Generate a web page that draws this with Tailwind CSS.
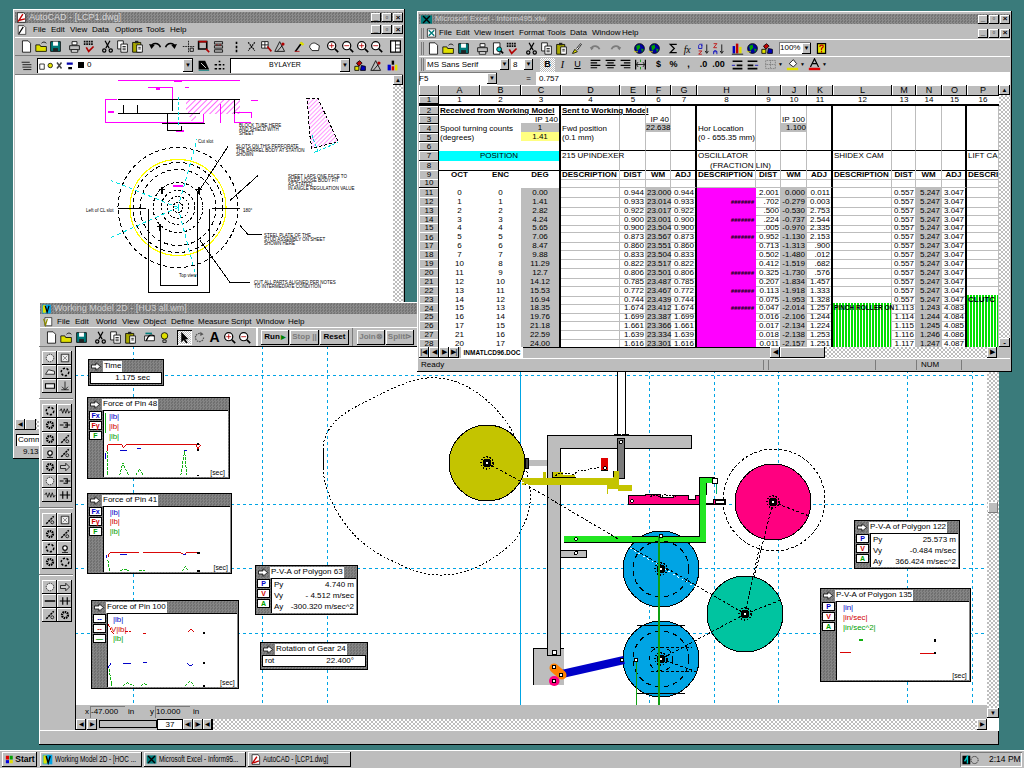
<!DOCTYPE html>
<html lang="en">
<head>
<meta charset="UTF-8">
<title>Desktop</title>
<script src="https://cdn.jsdelivr.net/npm/@tailwindcss/browser@4"></script>
</head>
<body class="m-0 overflow-hidden">
<!-- shared icons -->
<svg class="absolute h-0 w-0" xmlns="http://www.w3.org/2000/svg">
  <defs>
    <symbol id="new" viewBox="0 0 16 16"><path d="M3 1h7l3 3v11H3z" fill="#fff" stroke="#000"/></symbol>
    <symbol id="open" viewBox="0 0 16 16"><path d="M1 6h5l1 2h7v6H1z" fill="#e0e000" stroke="#000"/><path d="M8 4c2-2 4-2 6 0" fill="none" stroke="#000"/></symbol>
    <symbol id="save" viewBox="0 0 16 16"><path d="M2 2h12v12H2z" fill="#007b7b" stroke="#000"/><path d="M5 2h6v5H5z" fill="#fff"/><path d="M5 10h6v4H5z" fill="#222"/></symbol>
    <symbol id="print" viewBox="0 0 16 16"><path d="M5 2h6v4H5z" fill="#fff" stroke="#000"/><path d="M2 7h12v5H2z" fill="#bdbdbd" stroke="#000"/><path d="M4 12h8v3H4z" fill="#fff" stroke="#000"/></symbol>
    <symbol id="preview" viewBox="0 0 16 16"><path d="M3 1h8v14H3z" fill="#fff" stroke="#000"/><circle cx="10" cy="9" r="3" fill="#00c4c4" stroke="#000"/><path d="M12 11l3 3" stroke="#000" stroke-width="2"/></symbol>
    <symbol id="spell" viewBox="0 0 16 16"><path d="M1 2h12M1 5h12" stroke="#000" stroke-width="2" stroke-dasharray="2 1"/><path d="M4 9l3 5 6-6" fill="none" stroke="#b00000" stroke-width="2"/></symbol>
    <symbol id="cut" viewBox="0 0 16 16"><path d="M5 1l5 9M11 1l-5 9" stroke="#000" stroke-width="1.5"/><circle cx="4" cy="13" r="2" fill="none" stroke="#000" stroke-width="1.5"/><circle cx="12" cy="13" r="2" fill="none" stroke="#000" stroke-width="1.5"/></symbol>
    <symbol id="copy" viewBox="0 0 16 16"><path d="M2 1h7v10H2z" fill="#fff" stroke="#000"/><path d="M6 5h8v10H6z" fill="#fff" stroke="#000"/><path d="M8 8h4M8 10h4M8 12h4" stroke="#000"/></symbol>
    <symbol id="paste" viewBox="0 0 16 16"><path d="M2 3h10v12H2z" fill="#a8a800" stroke="#000"/><path d="M5 1h4v3H5z" fill="#222"/><path d="M7 6h7v9H7z" fill="#fff" stroke="#000"/><path d="M9 9h3M9 11h3" stroke="#000"/></symbol>
    <symbol id="brush" viewBox="0 0 16 16"><path d="M3 14l3-5 3 3-5 2z" fill="#e0e000" stroke="#000"/><path d="M8 8l5-6 1 1-5 7" fill="#fff" stroke="#000"/></symbol>
    <symbol id="undo" viewBox="0 0 16 16"><path d="M3 8c1-5 9-5 11 1" fill="none" stroke="#000" stroke-width="2"/><path d="M0 5l7 1-4 5z" fill="#000"/></symbol>
    <symbol id="redo" viewBox="0 0 16 16"><path d="M13 8c-1-5-9-5-11 1" fill="none" stroke="#000" stroke-width="2"/><path d="M16 5l-7 1 4 5z" fill="#000"/></symbol>
    <symbol id="undog" viewBox="0 0 16 16"><path d="M3 8c1-4 8-4 10 1" fill="none" stroke="#7b7b7b" stroke-width="2"/><path d="M1 6l5 1-3 3z" fill="#7b7b7b"/></symbol>
    <symbol id="redog" viewBox="0 0 16 16"><path d="M13 8c-1-4-8-4-10 1" fill="none" stroke="#7b7b7b" stroke-width="2"/><path d="M15 6l-5 1 3 3z" fill="#7b7b7b"/></symbol>
    <symbol id="snap" viewBox="0 0 16 16"><path d="M8 1v14M1 8h14" stroke="#000" stroke-dasharray="2 1"/><path d="M10 10h4v4h-4z" fill="#bdbdbd" stroke="#000"/></symbol>
    <symbol id="rbox" viewBox="0 0 16 16"><path d="M2 2h10v9H2z" fill="none" stroke="#000" stroke-width="2"/><path d="M2 2h10" stroke="#b00000" stroke-width="2"/><path d="M11 11l4 4" stroke="#b00000" stroke-width="2"/></symbol>
    <symbol id="stack" viewBox="0 0 16 16"><path d="M3 2h10v3H3zM3 7h10v3H3zM3 12h10v3H3z" fill="none" stroke="#000"/><path d="M6 5v2M10 5v2" stroke="#b00000"/></symbol>
    <symbol id="dots" viewBox="0 0 16 16"><path d="M8 2v3M8 7v3M8 12v3" stroke="#000" stroke-width="2"/></symbol>
    <symbol id="xcross" viewBox="0 0 16 16"><path d="M4 3l8 10M12 3L4 13" stroke="#000" stroke-dasharray="2 1" stroke-width="1.5"/></symbol>
    <symbol id="grid" viewBox="0 0 16 16"><path d="M2 2h8v8H2z" fill="#fff" stroke="#000"/><path d="M6 2v8M2 6h8" stroke="#000"/><path d="M9 8l5 6" stroke="#b00000" stroke-width="2"/></symbol>
    <symbol id="pen" viewBox="0 0 16 16"><path d="M3 14L11 3" stroke="#000" stroke-width="2"/><path d="M9 3l4 3" stroke="#e0e000" stroke-width="3"/><path d="M2 14h6" stroke="#b00000"/></symbol>
    <symbol id="hand" viewBox="0 0 16 16"><path d="M2 9c0-4 4-6 7-5l5 3-1 6H5z" fill="#fff" stroke="#000"/></symbol>
    <symbol id="zoomp" viewBox="0 0 16 16"><circle cx="7" cy="7" r="5" fill="#fff" stroke="#000" stroke-width="1.5"/><path d="M4 7h6M7 4v6" stroke="#b00000"/><path d="M11 11l4 4" stroke="#000" stroke-width="2"/></symbol>
    <symbol id="zoomm" viewBox="0 0 16 16"><circle cx="7" cy="7" r="5" fill="#fff" stroke="#000" stroke-width="1.5"/><path d="M4 7h6" stroke="#b00000"/><path d="M11 11l4 4" stroke="#000" stroke-width="2"/></symbol>
    <symbol id="pane" viewBox="0 0 16 16"><path d="M2 1h12v14H2z" fill="#fff" stroke="#000" stroke-width="1.5"/><path d="M8 1v14M8 6h6M8 10h6" stroke="#000"/></symbol>
    <symbol id="list" viewBox="0 0 16 16"><path d="M2 4h10M3 7h11M3 10h11M4 13h10" stroke="#000"/></symbol>
    <symbol id="tilt" viewBox="0 0 16 16"><path d="M2 2h8l5 11H2z" fill="#000"/><path d="M5 5l6 6" stroke="#fff"/><path d="M2 14h13" stroke="#007b7b"/></symbol>
    <symbol id="bars" viewBox="0 0 16 16"><path d="M2 6h3v2H2zM7 6h3v2H7zM12 6h2v2h-2zM2 11h3v2H2zM7 11h3v2H7zM12 11h2v2h-2zM7 2h2v2H7z" fill="#000"/></symbol>
    <symbol id="cubes" viewBox="0 0 16 16"><path d="M3 5l4-3 3 3-4 4z" fill="#c00000" stroke="#000"/><path d="M1 9h5v5H1z" fill="#e0e000" stroke="#000"/><path d="M9 8l5 1v5H8z" fill="#0000c0" stroke="#000"/></symbol>
    <symbol id="tri" viewBox="0 0 16 16"><path d="M7 2L1 14h12z" fill="none" stroke="#000"/><circle cx="11" cy="5" r="2" fill="#b00000"/><path d="M4 14l6-7" stroke="#000"/></symbol>
    <symbol id="colorbars" viewBox="0 0 16 16"><path d="M2 7h4v7H2z" fill="#0000d0"/><path d="M7 2h3v5H7z" fill="#000"/><path d="M7 9h3v5H7z" fill="#d00000"/><path d="M11 7h3v7h-3z" fill="#e0e000"/></symbol>
    <symbol id="globe" viewBox="0 0 16 16"><circle cx="8" cy="8" r="6" fill="#0000a0" stroke="#000"/><path d="M4 5l4-2 1 4-4 4zM10 8l3 1-2 4z" fill="#00a000"/><path d="M1 12h5" stroke="#e0e000"/></symbol>
    <symbol id="sigma" viewBox="0 0 16 16"><path d="M12 3H4l5 5-5 5h8" fill="none" stroke="#000" stroke-width="1.5"/></symbol>
    <symbol id="fx" viewBox="0 0 16 16"><text x="2" y="13" font-size="12" font-style="italic" font-family="Liberation Serif">fx</text></symbol>
    <symbol id="sorta" viewBox="0 0 16 16"><path d="M6 2v6H2M2 8V5c0-3 4-3 4 0" fill="none" stroke="#0000c0"/><path d="M2 11h4l-4 4h4" fill="none" stroke="#c00000"/><path d="M12 3v10M10 11l2 3 2-3" fill="none" stroke="#000"/></symbol>
    <symbol id="sortz" viewBox="0 0 16 16"><path d="M2 2h4l-4 5h4" fill="none" stroke="#c00000"/><path d="M6 15V12H2M2 15v-3c0-2 4-2 4 0" fill="none" stroke="#0000c0"/><path d="M12 3v10M10 11l2 3 2-3" fill="none" stroke="#000"/></symbol>
    <symbol id="chart" viewBox="0 0 16 16"><path d="M2 5h3v9H2z" fill="#0000c0"/><path d="M6 2h3v12H6z" fill="#c00000"/><path d="M10 6h3v8h-3z" fill="#e0e000"/><path d="M1 15h14" stroke="#000"/></symbol>
    <symbol id="help" viewBox="0 0 16 16"><path d="M3 2h10v12H3z" fill="#e0e000" stroke="#000" stroke-width="1.5"/><path d="M6 6c0-3 5-3 4 0l-2 2v2M8 11v2" fill="none" stroke="#c00000" stroke-width="1.5"/></symbol>
    <symbol id="bulb" viewBox="0 0 16 16"><circle cx="8" cy="6" r="4" fill="#e0e000" stroke="#000"/><path d="M6 11h4v3H6z" fill="#bdbdbd" stroke="#000"/></symbol>
    <symbol id="press" viewBox="0 0 16 16"><path d="M2 6h12v6H2z" fill="#fff" stroke="#000"/><path d="M4 12c3-8 6-8 10-6" fill="none" stroke="#000" stroke-width="1.5"/><path d="M3 3h8" stroke="#007b7b" stroke-width="2"/></symbol>
    <symbol id="arrowtool" viewBox="0 0 16 16"><path d="M4 1v13l3-3 3 4 2-1-3-4h4z" fill="#000"/></symbol>
    <symbol id="rotate" viewBox="0 0 16 16"><path d="M13 8a5 5 0 1 1-2-4" fill="none" stroke="#555" stroke-width="1.5" stroke-dasharray="2 1"/><path d="M9 1l4 3-4 2z" fill="#555"/></symbol>
    <symbol id="alignl" viewBox="0 0 16 16"><path d="M2 3h12M2 6h8M2 9h12M2 12h8" stroke="#000" stroke-width="1.5"/></symbol>
    <symbol id="alignc" viewBox="0 0 16 16"><path d="M2 3h12M4 6h8M2 9h12M4 12h8" stroke="#000" stroke-width="1.5"/></symbol>
    <symbol id="alignr" viewBox="0 0 16 16"><path d="M2 3h12M6 6h8M2 9h12M6 12h8" stroke="#000" stroke-width="1.5"/></symbol>
    <symbol id="merge" viewBox="0 0 16 16"><path d="M2 2v12M14 2v12" stroke="#000" stroke-width="1.5"/><path d="M3 8h10M5 5L3 8l2 3M11 5l2 3-2 3" fill="none" stroke="#000"/><path d="M8 2v3M8 11v3" stroke="#00a000"/></symbol>
    <symbol id="indentl" viewBox="0 0 16 16"><path d="M2 3h12v2H2zM7 8h7v2H7zM2 12h12v2H2z" fill="#000"/><path d="M1 9h4" stroke="#0000c0"/></symbol>
    <symbol id="indentr" viewBox="0 0 16 16"><path d="M2 3h12v2H2zM2 8h7v2H2zM2 12h12v2H2z" fill="#000"/><path d="M11 9h4" stroke="#0000c0"/></symbol>
    <symbol id="borders" viewBox="0 0 16 16"><path d="M2 3h12v10H2zM8 3v10M2 8h12" fill="none" stroke="#666" stroke-dasharray="1 1"/></symbol>
    <symbol id="fill" viewBox="0 0 16 16"><path d="M4 7l5-5 4 5-4 4z" fill="#fff" stroke="#000"/><path d="M1 12h14v3H1z" fill="#e0e000"/></symbol>
    <symbol id="fcolor" viewBox="0 0 16 16"><path d="M3 11L8 1l5 10M5 7h6" fill="none" stroke="#000" stroke-width="1.5"/><path d="M1 12h14v3H1z" fill="#e00000"/></symbol>
    <!-- drawing toolbar of Working Model -->
    <symbol id="t-disc" viewBox="0 0 16 16"><circle cx="8" cy="8" r="5" fill="#eee" stroke="#000" stroke-dasharray="2 1"/></symbol>
    <symbol id="t-sq" viewBox="0 0 16 16"><path d="M3 3h10v10H3z" fill="#eee" stroke="#000"/><path d="M5 5l6 6M11 5l-6 6" stroke="#777"/></symbol>
    <symbol id="t-poly" viewBox="0 0 16 16"><path d="M2 11l4-6 8 2v4z" fill="#eee" stroke="#000"/></symbol>
    <symbol id="t-ring" viewBox="0 0 16 16"><circle cx="8" cy="8" r="5" fill="none" stroke="#000" stroke-width="2" stroke-dasharray="3 2"/></symbol>
    <symbol id="t-rect" viewBox="0 0 16 16"><path d="M2 5h12v6H2z" fill="#eee" stroke="#000" stroke-width="1.5"/></symbol>
    <symbol id="t-anchor" viewBox="0 0 16 16"><path d="M8 2v10M3 13h10M4 9l4 4 4-4" fill="none" stroke="#000"/></symbol>
    <symbol id="t-gear" viewBox="0 0 16 16"><circle cx="8" cy="8" r="4" fill="none" stroke="#000" stroke-width="3" stroke-dasharray="2 1"/></symbol>
    <symbol id="t-spring" viewBox="0 0 16 16"><path d="M1 8l2-3 2 6 2-6 2 6 2-6 2 6 2-3" fill="none" stroke="#000"/></symbol>
    <symbol id="t-damp" viewBox="0 0 16 16"><path d="M1 8h5M6 5h5v6H6M8 8h7" fill="none" stroke="#000" stroke-width="1.5"/></symbol>
    <symbol id="t-bar" viewBox="0 0 16 16"><path d="M1 8h14" stroke="#000" stroke-width="2"/></symbol>
    <symbol id="t-fork" viewBox="0 0 16 16"><path d="M5 3v10M11 3v10M1 8h14" stroke="#000" stroke-width="1.5"/></symbol>
    <symbol id="t-arrow" viewBox="0 0 16 16"><path d="M2 6h7V3l5 5-5 5v-3H2z" fill="#ccc" stroke="#000"/></symbol>
    <symbol id="t-joint" viewBox="0 0 16 16"><circle cx="8" cy="8" r="3" fill="#fff" stroke="#000" stroke-width="1.5"/><path d="M8 11v3M4 14h8" stroke="#000"/></symbol>
    <symbol id="t-tool" viewBox="0 0 16 16"><path d="M3 13L13 3" stroke="#000" stroke-width="2" stroke-dasharray="3 1"/><circle cx="11" cy="11" r="2" fill="none" stroke="#000"/></symbol>
    <!-- hub of a gear in the mechanism -->
    <g id="hub"><circle r="4.5" fill="#000"/><circle r="6" fill="none" stroke="#000" stroke-width="1.6" stroke-dasharray="1.5 1.5"/><circle r="1.4" fill="#fff"/></g>
    <pattern id="hatch" width="4" height="4" patternUnits="userSpaceOnUse" patternTransform="rotate(45)"><path d="M0 0v4" stroke="#ff00ff" stroke-width="1.2"/></pattern>
    <pattern id="hatch2" width="3" height="3" patternUnits="userSpaceOnUse" patternTransform="rotate(45)"><path d="M0 0v3" stroke="#ff00ff" stroke-width="0.8"/></pattern>
  </defs>
</svg>

<div class="flex h-[768px] w-[1024px] flex-col font-['Liberation_Sans',sans-serif] text-black">
  <!-- desktop -->
  <div class="relative flex-1 overflow-hidden bg-[#3a7b7b]">

    <!-- AutoCAD window -->
    <div class="absolute left-[13px] top-[9px] flex h-[450px] w-[392px] flex-col bg-[#bdbdbd] px-[2px] pb-[2px] pt-[3px] shadow-[inset_-1px_-1px_0_#000,inset_1px_1px_0_#fff]">
      <div class="flex h-[11px] items-center bg-[#7b7b7b] bg-[image:repeating-conic-gradient(#8c8c8c_0_25%,#747474_0_50%)] bg-[length:3px_3px] pl-[1px] text-[9px] text-[#d8d8d8]">
        <svg class="mr-[2px] h-[11px] w-[11px]" viewBox="0 0 16 16"><path d="M2 1h9l3 3v11H2z" fill="#fff" stroke="#000"/><path d="M3 14L10 3M5 12l8-2" stroke="#c00000" stroke-width="2"/></svg>
        <span>AutoCAD - [LCP1.dwg]</span>
        <div class="ml-auto flex gap-[1px]" data-win="1"></div>
      </div>
      <div class="mt-[1px] flex h-[11px] items-center text-[8px]">
        <svg class="ml-[2px] mr-[6px] h-[10px] w-[10px]" viewBox="0 0 16 16"><path d="M2 1h9l3 3v11H2z" fill="#fff" stroke="#000"/><path d="M3 14L10 3" stroke="#000" stroke-width="2"/></svg>
        <span class="w-[18px]">File</span><span class="w-[19px]">Edit</span><span class="w-[22px]">View</span><span class="w-[23px]">Data</span><span class="w-[31px]">Options</span><span class="w-[24px]">Tools</span><span>Help</span>
        <div class="ml-auto flex gap-[1px]" data-win="1"></div>
      </div>
      <div id="acadbar1" class="mt-[2px] flex h-[18px] items-center border-t border-t-white pl-[4px]"></div>
      <div class="flex h-[19px] items-center gap-[1px] border-t border-t-[#7b7b7b] pl-[4px]">
        <span id="acadlayer"></span>
        <div class="ml-[2px] flex h-[15px] w-[156px] items-center justify-between bg-white pl-[2px] text-[8px] shadow-[inset_1px_1px_0_#000]">
          <span class="flex items-center gap-[3px]"><svg class="h-[9px] w-[36px]" viewBox="0 0 48 12"><path d="M1 4h6v7H1z" fill="#fff" stroke="#000"/><circle cx="15" cy="6" r="3" fill="#e0e000" stroke="#000"/><path d="M24 2l6 8M30 2l-6 8" stroke="#444" stroke-width="2"/><path d="M37 2h8v3h-8z" fill="#00a"/><path d="M39 8h5v3h-5z" fill="#000"/></svg><span class="inline-block h-[6px] w-[6px] bg-black"></span><span>0</span></span>
          <span class="flex h-[13px] w-[10px] items-center justify-center bg-[#bdbdbd] text-[6px] shadow-[inset_-1px_-1px_0_#000,inset_1px_1px_0_#fff]">▼</span>
        </div>
        <span id="acadmid" class="ml-[2px] flex gap-[1px]"></span>
        <div class="ml-[2px] flex h-[15px] w-[120px] items-center justify-between bg-white text-[7px] shadow-[inset_1px_1px_0_#000]">
          <span class="flex-1 text-center">BYLAYER</span>
          <span class="flex h-[13px] w-[10px] items-center justify-center bg-[#bdbdbd] text-[6px] shadow-[inset_-1px_-1px_0_#000,inset_1px_1px_0_#fff]">▼</span>
        </div>
        <span id="acadend" class="ml-[2px] flex gap-[1px]"></span>
      </div>
      <div class="flex flex-1 border-t border-t-[#7b7b7b]">
        <div class="relative flex-1 bg-white">
          <svg class="absolute inset-0 h-full w-full" viewBox="15 75 378 343" shape-rendering="crispEdges" font-family="Liberation Sans" font-size="4.5">
            <g stroke="#ff00ff" fill="none">
              <path d="M118 80H240M148 87H172V99M185 87H189M105 99H117M105 99V122H203V113M220 103V122M234 112H251V117M234 112V122H251M251 100H258"/>
            </g>
            <rect x="156" y="86" width="4" height="3" fill="#ff00ff"/>
            <rect x="174" y="79" width="8" height="2" fill="#ff00ff"/>
            <rect x="108" y="110" width="6" height="2" fill="#ff00ff"/>
            <rect x="176" y="129" width="8" height="2" fill="#ff00ff"/>
            <path d="M186 99H240V113H196V120H191L186 108Z" fill="url(#hatch)"/>
            <path d="M118 99H240M118 113H200M123 104V113M137 104V113M172 99V110M167 113V123M162 123H205M234 99V113M167 123V130H181V125" fill="none" stroke="#000"/>
            <path d="M178 96V125" stroke="#00e0e0" stroke-dasharray="3 2"/>
            <path d="M307 98H318L338 141 312 148 310 136Z" fill="url(#hatch2)" stroke="#000" stroke-dasharray="3 2"/>
            <path d="M314 152l24-10M318 151l-6-16" stroke="#00e0e0" stroke-dasharray="3 2"/>
            <g fill="none" stroke="#000" stroke-dasharray="4 3">
              <circle cx="178" cy="207" r="60"/>
              <circle cx="178" cy="207" r="45"/>
              <circle cx="178" cy="207" r="38"/>
              <circle cx="178" cy="207" r="25" stroke-dasharray="3 2"/>
              <circle cx="178" cy="207" r="17" stroke-dasharray="3 2"/>
              <circle cx="178" cy="207" r="11" stroke-dasharray="2 2"/>
              <circle cx="178" cy="207" r="5" stroke-dasharray="2 1"/>
            </g>
            <circle cx="178" cy="207" r="48" fill="none" stroke="#ffff00" stroke-width="1.2"/>
            <path d="M178 207L197 139M178 207L111 180M178 207L111 237M178 207L196 276" stroke="#00e0e0" stroke-dasharray="4 3"/>
            <path d="M148 208V292H209V208M160 225V285H197V190M118 208H146M212 208H240M228 146L198 192M258 175L230 200M240 225L248 234H262M200 240L230 282H250" fill="none" stroke="#000"/>
            <path d="M159 189h6M162 186v7M196 189h6M199 186v7M157 226h6M160 223v7" stroke="#000" stroke-width="1.5"/>
            <rect x="173" y="184" width="10" height="2" fill="#ff00ff"/>
            <g fill="#000">
              <text x="86" y="211">Left of CL slot</text>
              <text x="243" y="211">180°</text>
              <text x="198" y="142">Cut slot</text>
              <text x="239" y="126">BLOCK TUBE HERE</text><text x="239" y="130">AND SHIELD WITH</text><text x="239" y="134">SHEET</text>
              <text x="236" y="147">SLOTS ON THIS PERFORATE</text><text x="236" y="151">THE BARREL BODY AT STATION</text><text x="236" y="155">SHOWN</text>
              <text x="288" y="177">SHEET LAPS ONE FACE TO</text><text x="288" y="181">KEEP LOOSE BODY FIT</text><text x="288" y="185">AS STATED</text><text x="288" y="189">IN ANGLE REGULATION VALUE</text>
              <text x="264" y="236">STEEL PLATE OF THE</text><text x="264" y="240">STUD ASSEMBLY ON SHEET</text><text x="264" y="244">SHOWN HERE</text>
              <text x="254" y="283">CUT ALL PARTS ALIGNED PER NOTES</text><text x="254" y="287">TO INTERMEDIATE CONDITION</text>
              <text x="179" y="276">Top view</text>
            </g>
          </svg>
        </div>
        <div class="flex w-[10px] flex-col bg-[image:repeating-conic-gradient(#fff_0_25%,#bdbdbd_0_50%)] bg-[length:4px_4px]">
          <span class="flex h-[10px] items-center justify-center bg-[#bdbdbd] text-[6px] shadow-[inset_-1px_-1px_0_#000,inset_1px_1px_0_#fff]">▲</span>
        </div>
      </div>
      <div class="flex h-[11px] bg-[image:repeating-conic-gradient(#fff_0_25%,#bdbdbd_0_50%)] bg-[length:4px_4px]">
        <span class="flex w-[10px] items-center justify-center bg-[#bdbdbd] text-[6px] shadow-[inset_-1px_-1px_0_#000,inset_1px_1px_0_#fff]">◀</span>
        <span class="w-[11px] bg-[#bdbdbd] shadow-[inset_-1px_-1px_0_#000,inset_1px_1px_0_#fff]"></span>
      </div>
      <div class="mt-[4px] ml-[1px] flex h-[12px] items-center bg-white pl-[2px] text-[8px] shadow-[inset_1px_1px_0_#000]">Command:</div>
      <div class="flex h-[11px] items-center pl-[8px] text-[8px]">9.13, 2.17</div>
    </div>

    <!-- Working Model window -->
    <div class="absolute left-[39px] top-[302px] flex h-[443px] w-[960px] flex-col bg-[#bdbdbd] pt-[1px] shadow-[inset_-1px_-1px_0_#000,inset_1px_1px_0_#fff]">
      <div class="mx-[1px] flex h-[11px] items-center bg-[#7b7b7b] bg-[image:repeating-conic-gradient(#8c8c8c_0_25%,#747474_0_50%)] bg-[length:3px_3px] pl-[1px] text-[9px] text-[#cfcfcf]">
        <svg class="mr-[2px] h-[10px] w-[11px]" viewBox="0 0 16 16"><path d="M1 1h14v14H1z" fill="#00a4e4"/><path d="M2 2h5v12H2z" fill="#e0e000"/><path d="M6 3l3 10 3-10" fill="none" stroke="#000" stroke-width="2"/></svg>
        <span>Working Model 2D - [HU3 all.wm]</span>
      </div>
      <div class="mt-[2px] flex h-[11px] items-center pl-[4px] text-[8px]">
        <svg class="mr-[4px] h-[10px] w-[10px]" viewBox="0 0 16 16"><path d="M3 1h11v13H3z" fill="#fff" stroke="#000"/><path d="M1 3l3 10 3-10" fill="none" stroke="#8a8a00" stroke-width="2"/></svg>
        <span class="w-[18px]">File</span><span class="w-[21px]">Edit</span><span class="w-[26px]">World</span><span class="w-[21px]">View</span><span class="w-[28px]">Object</span><span class="w-[27px]">Define</span><span class="w-[33px]">Measure</span><span class="w-[25px]">Script</span><span class="w-[32px]">Window</span><span>Help</span>
      </div>
      <div class="flex h-[19px] items-center border-t border-t-white pl-[5px]">
        <span id="wmbar1" class="flex"></span>
        <span class="ml-[5px] flex bg-[image:repeating-conic-gradient(#fff_0_25%,#bdbdbd_0_50%)] bg-[length:2px_2px] shadow-[inset_1px_1px_0_#000,inset_-1px_-1px_0_#fff]" id="wmarrow"></span>
        <span id="wmbar2" class="flex"></span>
        <span class="ml-[4px] mr-[3px] h-[18px] w-[2px] bg-white"></span>
        <span class="flex h-[15px] w-[28px] items-center justify-center gap-[1px] text-[8px] font-bold shadow-[inset_-1px_-1px_0_#000,inset_1px_1px_0_#fff]">Run<span class="text-[6px] text-[#008000]">▶</span></span>
        <span class="ml-[1px] flex h-[15px] w-[29px] items-center justify-center text-[8px] font-bold text-[#7b7b7b] shadow-[inset_-1px_-1px_0_#000,inset_1px_1px_0_#fff]">Stop ||</span>
        <span class="ml-[1px] flex h-[15px] w-[29px] items-center justify-center text-[8px] font-bold shadow-[inset_-1px_-1px_0_#000,inset_1px_1px_0_#fff]">Reset</span>
        <span class="ml-[3px] mr-[4px] h-[18px] w-[1px] bg-[#7b7b7b]"></span>
        <span class="flex h-[15px] w-[28px] items-center justify-center text-[8px] font-bold text-[#7b7b7b] shadow-[inset_-1px_-1px_0_#000,inset_1px_1px_0_#fff]">Join⊗</span>
        <span class="ml-[1px] flex h-[15px] w-[28px] items-center justify-center text-[8px] font-bold text-[#7b7b7b] shadow-[inset_-1px_-1px_0_#000,inset_1px_1px_0_#fff]">Split⊳</span>
      </div>
      <div class="flex flex-1">
        <!-- drawing tools -->
        <div id="wmtools" class="flex w-[36px] flex-col items-start border-t border-t-[#7b7b7b] pl-[3px] pt-[4px]"></div>
        <div class="flex flex-1 flex-col">
          <div id="canvas" class="relative flex-1 overflow-hidden border-l border-t border-black bg-white">
            <svg class="absolute inset-0 h-[358px] w-[909px]" viewBox="76 347 909 358" shape-rendering="crispEdges">
              <path d="M427 378C400 382 380 395 363 403 345 412 335 420 330 428 325 436 323 442 323 448L323 468C324 490 335 512 350 530 365 548 385 558 397 563 410 570 425 575 440 575 470 576 500 556 515 540 525 525 532 510 530 490 528 470 520 440 505 420 490 400 470 385 450 380 440 378 433 377 427 378Z" fill="none" stroke="#000" stroke-dasharray="2 2"/>
              <path d="M323 448V468" stroke="#000"/>
              <g stroke="#00a4e4" stroke-dasharray="3 3">
                <path d="M133 346V705M262 346V705M327 346V705M649 346V705M714 346V705M778 346V705M907 346V705M972 346V705"/>
                <path d="M75 375H985M75 504H985M75 568H985M75 633H985"/>
              </g>
              <path d="M520 346V705" stroke="#00a4e4"/>
              <!-- gears -->
              <circle cx="487" cy="463" r="38" fill="#c4c400" stroke="#000"/>
              <circle cx="661" cy="569" r="38" fill="#00a4e4" stroke="#000"/>
              <circle cx="661" cy="659" r="38" fill="#00a4e4" stroke="#000"/>
              <circle cx="745" cy="614" r="38" fill="#00c4a0" stroke="#000"/>
              <circle cx="773" cy="502" r="38" fill="#ff0080" stroke="#000"/>
              <circle cx="774" cy="500" r="51" fill="none" stroke="#000" stroke-dasharray="3 2"/>
              <!-- frame -->
              <rect x="533" y="648" width="31" height="37" fill="#bdbdbd"/>
              <path d="M533 685V648H564" fill="none" stroke="#000"/>
              <path d="M547 435H691V448H560V655H547Z" fill="#bdbdbd" stroke="#000"/>
              <rect x="560" y="550" width="26" height="7" fill="#bdbdbd" stroke="#000"/>
              <circle cx="576" cy="553" r="1.5" fill="#fff" stroke="#000"/>
              <rect x="527" y="460" width="20" height="6" fill="#bdbdbd"/>
              <rect x="525" y="458" width="3" height="10" fill="#444" stroke="#000"/>
              <!-- vertical shaft -->
              <rect x="617" y="346" width="8" height="89" fill="#fff" stroke="#000"/>
              <path d="M614 435H630" stroke="#000" stroke-width="2" stroke-dasharray="3 1"/>
              <rect x="617" y="438" width="7" height="40" fill="#7b7b7b" stroke="#000"/>
              <circle cx="621" cy="442" r="1.5" fill="#fff" stroke="#000"/>
              <!-- olive cam follower -->
              <path d="M522 478H543V472H546V478H552V472H563V475H575V478H613V471H619V485H632V491H618V489H608V494H607V485H522Z" fill="#c4c400"/>
              <path d="M552 477H576M613 477V471M552 477V472" stroke="#000" fill="none"/>
              <path d="M555 476C563 470 568 475 575 474 580 466 585 475 590 468 595 470 600 466 605 467" fill="none" stroke="#000" stroke-dasharray="2 1.5"/>
              <rect x="601" y="458" width="7" height="12" fill="#e00000"/>
              <path d="M601 470H608" stroke="#000" stroke-width="1"/>
              <circle cx="605" cy="468" r="1.4" fill="#fff" stroke="#000"/>
              <!-- pink bar and spring -->
              <path d="M628 495H645V494H660V497H673V495H688V499H695V495H699V503H713V499H725V504H628Z" fill="#ff0080" stroke="#000"/>
              <path d="M650 497C656 492 660 500 665 494 670 498 672 494 676 497" fill="none" stroke="#000" stroke-dasharray="2 1"/>
              <circle cx="632" cy="501" r="1.4" fill="#fff" stroke="#000"/>
              <!-- green lever -->
              <path d="M564 536H699V477H715V483H706V542H564Z" fill="#22e622"/>
              <path d="M632 536H699V477H715M706 483V495M564 542H706" fill="none" stroke="#000"/>
              <circle cx="576" cy="539" r="1.4" fill="#fff" stroke="#000"/>
              <rect x="712" y="478" width="5" height="5" fill="#fff" stroke="#000"/>
              <rect x="715" y="500" width="9" height="3" fill="#fff" stroke="#000"/>
              <path d="M716 484V494" stroke="#0a6" stroke-width="1"/>
              <!-- dashed construction lines and spokes -->
              <g fill="none" stroke="#000" stroke-dasharray="3 2">
                <path d="M487 463L522 482"/>
                <path d="M525 484L620 540"/>
                <path d="M632 548L745 614"/>
                <path d="M745 614L781 600M745 614L760 545M745 614L661 659M773 502L809 516M773 502L754 578"/>
                <circle cx="661" cy="569" r="28" stroke-dasharray="5 4"/>
                <circle cx="661" cy="659" r="28" stroke-dasharray="5 4"/>
                <circle cx="661" cy="659" r="12" stroke-dasharray="5 4"/>
                <path d="M661 659L697 672M651 647H692M651 671H692"/>
              </g>
              <path d="M522 482L533 488M630 548L700 590" stroke="#fff" stroke-dasharray="2 3"/>
              <path d="M637 625H685M637 693H685" stroke="#000"/>
              <use href="#hub" x="487" y="463"/><use href="#hub" x="661" y="569"/><use href="#hub" x="661" y="659"/><use href="#hub" x="745" y="614"/><use href="#hub" x="773" y="502"/>
              <!-- rods -->
              <path d="M659 536V705" stroke="#10a010" stroke-width="2"/>
              <path d="M636 660V705" stroke="#10a010"/>
              <circle cx="636" cy="660" r="1.6" fill="#fff" stroke="#000"/>
              <circle cx="661" cy="536" r="1.6" fill="#fff" stroke="#000"/>
              <g shape-rendering="auto">
                <path d="M562 674L624 660" stroke="#0000c8" stroke-width="8"/>
                <path d="M554 668L562 675" stroke="#ff8000" stroke-width="9" stroke-linecap="round"/>
                <path d="M554 681h0.5" stroke="#ff0080" stroke-width="10" stroke-linecap="round"/>
              </g>
              <circle cx="622" cy="660" r="1.6" fill="#fff" stroke="#000"/>
              <circle cx="554" cy="667" r="1.6" fill="#fff" stroke="#000"/>
              <circle cx="561" cy="675" r="1.6" fill="#fff" stroke="#000"/>
              <circle cx="554" cy="681" r="1.6" fill="#fff" stroke="#000"/>
              <rect x="552" y="650" width="4" height="4" fill="#fff" stroke="#000"/>
            </svg>
            <div id="panels"></div>
          </div>
          <!-- coordinates -->
          <div class="flex h-[14px] items-center border-l border-black pl-[9px] text-[8px]">
            <span>x</span><span class="ml-[1px] flex h-[12px] w-[35px] items-center pl-[1px] shadow-[inset_1px_1px_0_#7b7b7b]">-47.000</span><span class="ml-[3px] w-[22px]">in</span>
            <span>y</span><span class="ml-[1px] flex h-[12px] w-[35px] items-center pl-[1px] shadow-[inset_1px_1px_0_#7b7b7b]">10.000</span><span class="ml-[3px]">in</span>
          </div>
          <div class="flex h-[11px] border-l border-black text-[6px]">
            <span class="flex w-[10px] items-center justify-center shadow-[inset_-1px_-1px_0_#000,inset_1px_1px_0_#fff]">◀</span>
            <span class="ml-[1px] flex w-[10px] items-center justify-center shadow-[inset_-1px_-1px_0_#000,inset_1px_1px_0_#fff]">▶</span>
            <span class="ml-[2px] mt-[1px] h-[8px] w-[58px] border border-black"></span>
            <span class="flex w-[26px] items-center justify-center border border-black bg-white text-[8px]">37</span>
            <span class="flex w-[10px] items-center justify-center shadow-[inset_-1px_-1px_0_#000,inset_1px_1px_0_#fff]">◀|</span>
            <span class="flex w-[10px] items-center justify-center shadow-[inset_-1px_-1px_0_#000,inset_1px_1px_0_#fff]">|▶</span>
            <span class="flex w-[10px] items-center justify-center border-r border-black shadow-[inset_-1px_-1px_0_#000,inset_1px_1px_0_#fff]">◀</span>
            <span class="flex-1 bg-[image:repeating-conic-gradient(#fff_0_25%,#bdbdbd_0_50%)] bg-[length:4px_4px]"></span>
            <span class="flex w-[10px] items-center justify-center shadow-[inset_-1px_-1px_0_#000,inset_1px_1px_0_#fff]">▶</span>
          </div>
        </div>
        <div class="flex w-[12px] flex-col">
          <div class="relative flex-1 bg-[image:repeating-conic-gradient(#fff_0_25%,#bdbdbd_0_50%)] bg-[length:4px_4px]">
            <span class="absolute left-[1px] top-[156px] h-[11px] w-[10px] bg-[#bdbdbd] shadow-[inset_-1px_-1px_0_#7b7b7b,inset_1px_1px_0_#fff]"></span>
          </div>
          <span class="flex h-[10px] items-center justify-center bg-[#bdbdbd] text-[6px] shadow-[inset_-1px_-1px_0_#000,inset_1px_1px_0_#fff]">▼</span>
          <span class="h-[12px] bg-white"></span>
        </div>
      </div>
      <div class="h-[15px] border-t border-t-white"></div>
    </div>

    <!-- Excel window -->
    <div class="absolute left-[417px] top-[11px] flex h-[361px] w-[595px] flex-col bg-[#bdbdbd] px-[2px] pt-[3px] shadow-[inset_-1px_-1px_0_#000,inset_1px_1px_0_#fff]">
      <div class="flex h-[10px] items-center bg-[#7b7b7b] bg-[image:repeating-conic-gradient(#8c8c8c_0_25%,#747474_0_50%)] bg-[length:3px_3px] pl-[2px] text-[8px] text-[#cfcfcf]">
        <svg class="mr-[3px] h-[9px] w-[11px]" viewBox="0 0 16 12"><path d="M0 0h16v12H0z" fill="#007b7b"/><path d="M3 1l10 10M13 1L3 11" stroke="#000" stroke-width="2"/></svg>
        <span>Microsoft Excel - Inform495.xlw</span>
        <div class="ml-auto flex gap-[1px]" data-win="1"></div>
      </div>
      <div class="mt-[3px] flex h-[12px] items-center pl-[2px] text-[8px]">
        <span class="mr-[2px] h-[11px] w-[3px] border-x border-x-[#7b7b7b]"></span>
        <svg class="mr-[2px] h-[10px] w-[11px]" viewBox="0 0 16 14"><path d="M2 1h12v12H2z" fill="#fff" stroke="#000"/><path d="M4 3l8 8M12 3l-8 8" stroke="#007b7b" stroke-width="2"/></svg>
        <span class="w-[17px]">File</span><span class="w-[18px]">Edit</span><span class="w-[20px]">View</span><span class="w-[25px]">Insert</span><span class="w-[28px]">Format</span><span class="w-[23px]">Tools</span><span class="w-[22px]">Data</span><span class="w-[30px]">Window</span><span>Help</span>
        <div class="ml-auto flex gap-[1px]" data-win="1"></div>
      </div>
      <div id="xlbar1" class="flex h-[17px] items-center border-t border-t-white pl-[2px]"></div>
      <div id="xlbar2" class="flex h-[16px] items-center border-t border-t-white pl-[2px]"></div>
      <div class="flex h-[13px] items-stretch text-[8px]">
        <div class="flex w-[78px] items-center justify-center bg-white shadow-[inset_1px_1px_0_#7b7b7b]">F5<span class="ml-auto flex h-[11px] w-[10px] items-center justify-center bg-[#bdbdbd] text-[6px] shadow-[inset_-1px_-1px_0_#000,inset_1px_1px_0_#fff]">▼</span></div>
        <div class="flex w-[39px] items-center justify-end pr-[5px]">=</div>
        <div class="flex flex-1 items-center bg-white pl-[3px]">0.757</div>
      </div>
      <div class="flex h-[262px]">
        <div id="sheet" class="h-full w-[580px] overflow-hidden bg-white"></div>
        <div class="flex w-[11px] flex-col bg-[image:repeating-conic-gradient(#fff_0_25%,#bdbdbd_0_50%)] bg-[length:4px_4px]">
          <span class="flex h-[10px] items-center justify-center bg-[#bdbdbd] text-[6px] shadow-[inset_-1px_-1px_0_#000,inset_1px_1px_0_#fff]">▲</span>
          <span class="mt-auto flex h-[9px] items-center justify-center bg-[#bdbdbd] text-[8px] font-bold shadow-[inset_-1px_-1px_0_#000,inset_1px_1px_0_#fff]">-</span>
        </div>
      </div>
      <div class="flex h-[11px] text-[7px]">
        <span class="flex w-[10px] items-center justify-center shadow-[inset_-1px_-1px_0_#000,inset_1px_1px_0_#fff]">|◀</span>
        <span class="flex w-[10px] items-center justify-center shadow-[inset_-1px_-1px_0_#000,inset_1px_1px_0_#fff]">◀</span>
        <span class="flex w-[10px] items-center justify-center shadow-[inset_-1px_-1px_0_#000,inset_1px_1px_0_#fff]">▶</span>
        <span class="flex w-[10px] items-center justify-center shadow-[inset_-1px_-1px_0_#000,inset_1px_1px_0_#fff]">▶|</span>
        <span class="ml-[2px] flex w-[62px] items-center justify-center whitespace-nowrap bg-white text-[6.5px] font-bold">INMATLCD96.DOC</span>
        <span class="w-[247px] border-t border-t-black"></span>
        <span class="flex w-[10px] items-center justify-center shadow-[inset_-1px_-1px_0_#000,inset_1px_1px_0_#fff]">◀</span>
        <span class="w-[45px] shadow-[inset_-1px_-1px_0_#000,inset_1px_1px_0_#fff]"></span>
        <span class="flex-1 bg-[image:repeating-conic-gradient(#fff_0_25%,#bdbdbd_0_50%)] bg-[length:4px_4px]"></span>
        <span class="flex w-[10px] items-center justify-center shadow-[inset_-1px_-1px_0_#000,inset_1px_1px_0_#fff]">▶</span>
        <span class="w-[13px]"></span>
      </div>
      <div class="flex h-[12px] items-center border-t border-t-white pl-[2px] text-[8px]">
        <span class="w-[342px]">Ready</span>
        <span class="h-[10px] w-[6px] border-x border-x-[#7b7b7b]"></span>
        <span class="h-[10px] w-[107px] border-r border-r-[#7b7b7b]"></span>
        <span class="h-[10px] w-[41px] border-r border-r-[#7b7b7b]"></span>
        <span class="flex h-[10px] w-[45px] items-center border-r border-r-[#7b7b7b] pl-[4px]">NUM</span>
      </div>
    </div>
  </div>

  <!-- taskbar -->
  <div class="flex h-[18px] items-center gap-[2px] border-t border-t-white bg-[#bdbdbd] px-[2px] text-[8.5px]">
    <span class="mr-[1px] flex h-[15px] w-[35px] items-center justify-center gap-[1px] font-bold shadow-[inset_-1px_-1px_0_#000,inset_1px_1px_0_#fff]">
      <svg class="h-[9px] w-[10px]" viewBox="0 0 16 14"><path d="M3 1h5v6H3z" fill="#e00000"/><path d="M9 1h5v6H9z" fill="#00a000"/><path d="M3 8h5v5H3z" fill="#0000e0"/><path d="M9 8h5v5H9z" fill="#e0e000"/></svg>Start
    </span>
    <span class="flex h-[15px] w-[102px] items-center gap-[2px] overflow-hidden whitespace-nowrap pl-[2px] shadow-[inset_-1px_-1px_0_#000,inset_1px_1px_0_#fff]">
      <svg class="h-[11px] w-[11px] shrink-0" viewBox="0 0 16 16"><path d="M1 1h14v14H1z" fill="#00a4e4"/><path d="M2 2h5v12H2z" fill="#e0e000"/><path d="M6 3l3 10 3-10" fill="none" stroke="#000" stroke-width="2"/></svg><span class="inline-block origin-left scale-x-75">Working Model 2D - [HOC ...</span>
    </span>
    <span class="flex h-[15px] w-[102px] items-center gap-[2px] overflow-hidden whitespace-nowrap pl-[2px] shadow-[inset_-1px_-1px_0_#000,inset_1px_1px_0_#fff]">
      <svg class="h-[11px] w-[11px] shrink-0" viewBox="0 0 16 16"><path d="M1 2h14v12H1z" fill="#007b7b"/><path d="M3 3l10 10M13 3L3 13" stroke="#000" stroke-width="2"/></svg><span class="inline-block origin-left scale-x-75">Microsoft Excel - Inform95...</span>
    </span>
    <span class="flex h-[15px] w-[103px] items-center gap-[2px] overflow-hidden whitespace-nowrap pl-[2px] shadow-[inset_-1px_-1px_0_#000,inset_1px_1px_0_#fff]">
      <svg class="h-[11px] w-[11px] shrink-0" viewBox="0 0 16 16"><path d="M3 1h9l2 3v11H3z" fill="#fff" stroke="#000"/><path d="M3 14L10 4M5 13l8-3" stroke="#c00000" stroke-width="2"/></svg><span class="inline-block origin-left scale-x-75">AutoCAD - [LCP1.dwg]</span>
    </span>
    <span class="ml-auto flex h-[15px] w-[62px] items-center pl-[2px] shadow-[inset_1px_1px_0_#7b7b7b,inset_-1px_-1px_0_#fff]">
      <svg class="h-[10px] w-[18px]" viewBox="0 0 24 14"><path d="M0 1h11v12H0z" fill="#000"/><path d="M3 9l4-7v10" fill="none" stroke="#00c4c4" stroke-width="2"/><circle cx="17" cy="7" r="5" fill="none" stroke="#000" stroke-dasharray="2 1"/></svg>
      <span class="ml-[9px]">2:14 PM</span>
    </span>
  </div>
</div>

<script>
// raised / sunken looks used by every button
const RAISED = 'shadow-[inset_-1px_-1px_0_#000,inset_1px_1px_0_#fff]';
const ico = (n, w) => `<span class="flex h-[15px] w-[15px] items-center justify-center"><svg class="h-[13px] w-[13px]" viewBox="0 0 16 16"><use href="#${n}"/></svg></span>`;
const bar = (id, list) => {
  document.getElementById(id).innerHTML = list.split(' ').map(n => n === '|' ? '<span class="w-[4px]"></span>' : n === '_' ? '<span class="w-[5px]"></span>' : ico(n)).join('');
};

bar('acadbar1', 'new open save | print spell | cut copy paste | undo redo | snap rbox stack | dots xcross grid tri | pen hand | zoomp zoomm zoomp zoomm | pane');
bar('acadlayer', 'list');
bar('acadmid', 'tilt bars');
bar('acadend', 'cubes tri colorbars');
bar('wmbar1', 'new open save | cut copy paste | press bulb');
bar('wmarrow', 'arrowtool');
bar('wmbar2', 'rotate');
document.getElementById('wmbar2').innerHTML += `<span class="flex h-[15px] w-[15px] items-center justify-center text-[14px] font-bold">A</span>` + ico('zoomp') + ico('zoomm');

// Excel toolbars
bar('xlbar1', 'new open save | print preview spell | cut copy paste brush | undog _ redog _ | globe globe | sigma fx sorta sortz | chart globe cubes');
document.getElementById('xlbar1').innerHTML = '<span class="mr-[2px] h-[13px] w-[3px] border-x border-x-[#7b7b7b]"></span>' + document.getElementById('xlbar1').innerHTML
  + `<span class="ml-[4px] flex h-[12px] w-[32px] items-center justify-between bg-white pl-[1px] text-[8px] shadow-[inset_1px_1px_0_#7b7b7b]">100%<span class="flex h-[11px] w-[9px] items-center justify-center bg-[#bdbdbd] text-[6px] ${RAISED}">▼</span></span><span class="ml-[3px]"></span>` + ico('help');
document.getElementById('xlbar2').innerHTML =
  `<span class="mr-[2px] h-[13px] w-[3px] border-x border-x-[#7b7b7b]"></span>
   <span class="flex h-[11px] w-[83px] items-center justify-between bg-white pl-[1px] text-[8px]">MS Sans Serif<span class="flex h-[11px] w-[9px] items-center justify-center bg-[#bdbdbd] text-[6px] ${RAISED}">▼</span></span>
   <span class="ml-[2px] flex h-[11px] w-[22px] items-center justify-between bg-white pl-[2px] text-[8px]">8<span class="flex h-[11px] w-[9px] items-center justify-center bg-[#bdbdbd] text-[6px] ${RAISED}">▼</span></span>
   <span class="ml-[7px] flex h-[14px] w-[15px] items-center justify-center bg-[image:repeating-conic-gradient(#fff_0_25%,#bdbdbd_0_50%)] bg-[length:2px_2px] text-[9px] font-bold">B</span>
   <span class="flex h-[14px] w-[15px] items-center justify-center font-['Liberation_Serif'] text-[10px] italic">I</span>
   <span class="flex h-[14px] w-[15px] items-center justify-center text-[9px] underline">U</span><span class="w-[3px]"></span>`
  + ['alignl','alignc','alignr','merge'].map(n => ico(n)).join('') + '<span class="w-[3px]"></span>'
  + ['$','%',',','.0','.00'].map(t => `<span class="flex h-[14px] w-[15px] items-center justify-center text-[9px] font-bold">${t}</span>`).join('')
  + '<span class="w-[4px]"></span>' + ico('indentl') + ico('indentr') + '<span class="w-[3px]"></span>' + ico('borders') + '<span class="w-[7px] text-[5px]">▼</span>' + ico('fill') + '<span class="w-[7px] text-[5px]">▼</span>' + ico('fcolor') + '<span class="w-[7px] text-[5px]">▼</span>';

// title bar buttons
document.querySelectorAll('[data-win]').forEach(el => {
  el.innerHTML = ['_','▫','×'].map(t => `<span class="flex h-[9px] w-[10px] items-center justify-center bg-[#bdbdbd] text-[8px] font-bold leading-none text-black ${RAISED}">${t}</span>`).join('');
});

// Working Model drawing tools
const toolGroups = [
  ['t-disc','t-sq','t-poly','t-ring','t-rect','t-anchor'],
  ['t-ring','t-spring','t-gear','t-damp','t-gear','t-tool','t-joint','t-tool','t-gear','t-arrow','t-disc','t-damp','t-spring','t-fork'],
  ['t-tool','t-sq','t-gear','t-tool','t-ring','t-joint','t-gear','t-ring'],
  ['t-disc','t-arrow','t-bar','t-fork','t-tool','t-gear'],
];
document.getElementById('wmtools').innerHTML = toolGroups.map(g =>
  '<div class="mb-[5px] grid w-[30px] grid-cols-2">' + g.map(n => `<span class="flex h-[14px] items-center justify-center ${RAISED}"><svg class="h-[12px] w-[12px]" viewBox="0 0 16 16"><use href="#${n}"/></svg></span>`).join('') + '</div>'
).join('<div class="mb-[4px] ml-[-3px] h-[2px] w-[34px] border-t border-t-[#7b7b7b] border-b border-b-white"></div>');

// floating meters on the canvas
const arrow = '<svg class="mx-[1px] h-[9px] w-[12px] shrink-0" viewBox="0 0 14 12"><path d="M1 4h6V1l6 5-6 5V8H1z" fill="#fff" stroke="#000"/></svg>';
const head = t => `<div class="flex h-[12px] items-center">${arrow}<span class="flex h-[11px] items-center whitespace-nowrap bg-white px-[1px] text-[8px] leading-none">${t}</span></div>`;
const side = c => `<span class="mb-[1px] flex h-[9px] w-[13px] items-center justify-center border border-black bg-white text-[7px] font-bold leading-none ${c[1]}">${c[0]}</span>`;
const DITHER = 'bg-[#7b7b7b] bg-[image:repeating-conic-gradient(#858585_0_25%,#707070_0_50%)] bg-[length:3px_3px]';

const chart = (pos, title, btns, vb, body) => `
  <div class="absolute flex flex-col border border-black ${DITHER} ${pos}">
    ${head(title)}
    <div class="flex flex-1 pb-[1px] pr-[1px]">
      <div class="w-[15px] shrink-0 pl-[1px] pt-[1px]">${btns.map(side).join('')}</div>
      <div class="relative flex-1 border-l border-t border-black bg-white">
        <svg class="absolute inset-0 h-full w-full" viewBox="${vb}" font-family="Liberation Sans" font-size="8" shape-rendering="crispEdges">${body}</svg>
      </div>
    </div>
  </div>`;
const values = (pos, title, btns, rows) => `
  <div class="absolute flex flex-col border border-black ${DITHER} ${pos}">
    ${head(title)}
    <div class="flex flex-1 pb-[1px] pr-[1px]">
      <div class="w-[15px] shrink-0 pl-[1px] pt-[1px]">${btns.map(side).join('')}</div>
      <div class="flex flex-1 flex-col justify-around border-l border-t border-black bg-white px-[2px] text-[8px] leading-none">${rows.map(r => `<div class="flex justify-between"><span>${r[0]}</span><span class="whitespace-nowrap">${r[1]}</span></div>`).join('')}</div>
    </div>
  </div>`;
const single = (pos, title, l, v) => `
  <div class="absolute flex flex-col border border-black ${DITHER} ${pos}">
    ${head(title)}
    <div class="mx-[1px] flex h-[12px] items-center justify-between border border-black bg-white px-[2px] text-[8px]"><span>${l}</span><span class="mr-[9px]">${v}</span></div>
  </div>`;

const FXY = [['Fx','text-[#0000c8]'],['Fy','text-[#d00000]'],['F','text-[#00a000]']];
const PVA = [['P','text-[#0000c8]'],['V','text-[#d00000]'],['A','text-[#00a000]']];
const dashG = 'fill="none" stroke="#10b010" stroke-dasharray="3 1"';
const legend = (x, a, b, c) => `<text x="${x}" y="418" fill="#0000c8">${a}</text><text x="${x}" y="428" fill="#d00000">${b}</text><text x="${x}" y="438" fill="#00a000">${c}</text>`;

document.getElementById('panels').innerHTML =
  single('left-[12px] top-[12px] h-[27px] w-[76px]', 'Time', '', '1.175 sec')
  + chart('left-[11px] top-[50px] h-[82px] w-[143px]', 'Force of Pin 48', FXY, '102 410 126 66',
      legend(107, '|lb|', '|lb|', '|lb|')
      + `<path d="M104 412V432" stroke="#10b010"/>
         <path d="M105 450L106 444H120L122 447 124 444H196L197 449 200 444H197" fill="none" stroke="#d80000"/>
         <path d="M118 450H125M136 448H140M183 450H186M104 452V458" stroke="#0000c8"/>
         <path d="M105 450L106 475M118 475L121 462 127 475M134 475L138 468 142 475M180 475L184 450 186 475" ${dashG}/>
         <path d="M196 443H199M196 449H199M196 475H199" stroke="#000" stroke-width="2"/>
         <text x="210" y="474" font-size="7">[sec]</text>`)
  + chart('left-[11px] top-[146px] h-[81px] w-[145px]', 'Force of Pin 41', FXY, '102 505 128 67',
      `<text x="107" y="513" fill="#0000c8">|lb|</text><text x="107" y="523" fill="#d00000">|lb|</text><text x="107" y="533" fill="#00a000">|lb|</text>
       <path d="M105 557L107 552H137M141 552H180L184 554 186 552H198" fill="none" stroke="#d80000"/>
       <path d="M118 554H125M183 554H186M104 554V558" stroke="#0000c8"/>
       <path d="M105 560L107 571M118 571L122 569 127 571M137 571L140 570 143 571M182 571L185 566 188 571" ${dashG}/>
       <path d="M197 552H200M197 571H200" stroke="#000" stroke-width="2"/>
       <text x="214" y="570" font-size="7">[sec]</text>`)
  + chart('left-[15px] top-[253px] h-[89px] w-[148px] border-[#7b7b7b]', 'Force of Pin 100', [['--','text-[#0000c8]'],['--','text-[#d00000]'],['—','text-[#00a000]']], '107 613 130 73',
      `<text x="112" y="621" fill="#0000c8">|lb|</text><text x="110" y="631" fill="#d00000">V|lb|</text><text x="112" y="640" fill="#00a000">|lb|</text>
       <path d="M107 623L113 634M124 630H130M142 632H146M188 630L191 628 194 631" stroke="#d80000" stroke-dasharray="3 1" fill="none"/>
       <path d="M107 667L110 662M122 663H130M142 662H146M187 663L190 665 193 663" stroke="#0000c8" fill="none"/>
       <path d="M108 668L111 685M122 685L127 682 133 685M140 685L144 683 147 685M185 685L190 680 193 685" ${dashG}/>
       <path d="M203 632H205M203 662H205M203 685H205" stroke="#000" stroke-width="2"/>
       <text x="220" y="684" font-size="7">[sec]</text>`)
  + values('left-[179px] top-[218px] h-[50px] w-[103px]', 'P-V-A of Polygon 63', PVA, [['Py','4.740 m'],['Vy','- 4.512 m/sec'],['Ay','-300.320 m/sec^2']])
  + single('left-[184px] top-[295px] h-[28px] w-[108px]', 'Rotation of Gear 24', 'rot', '22.400°')
  + values('left-[778px] top-[173px] h-[49px] w-[106px]', 'P-V-A of Polygon 122', PVA, [['Py','25.573 m'],['Vy','-0.484 m/sec'],['Ay','366.424 m/sec^2']])
  + chart('left-[744px] top-[241px] h-[94px] w-[151px]', 'P-V-A of Polygon 135', PVA, '836 600 134 79',
      `<text x="842" y="608" fill="#0000c8">|in|</text><text x="842" y="618" fill="#d00000">|in/sec|</text><text x="842" y="628" fill="#00a000">|in/sec^2|</text>
       <path d="M858 638H862" stroke="#10b010" stroke-width="2"/>
       <path d="M839 651H850M920 652H935" stroke="#d80000"/>
       <path d="M935 637V641M934 652H937" stroke="#000" stroke-width="2"/>
       <text x="953" y="677" font-size="7">[sec]</text>`);

// spreadsheet
const letters = 'A B C D E F G H I J K L M N O P'.split(' ');
const GRID = 'grid grid-cols-[20px_41px_41px_40px_59px_26px_25px_26px_59px_25px_26px_26px_59px_24px_26px_25px_32px]';
const HEADCELL = `flex items-center justify-center bg-[#bdbdbd] leading-none ${RAISED}`;

const deg = ['0.00','1.41','2.82','4.24','5.65','7.06','8.47','9.88','11.29','12.7','14.12','15.53','16.94','18.35','19.76','21.18','22.59','24.00'];
const oct = ['0','1','2','3','4','5','6','7','10','11','12','13','14','15','16','17','21','20'];
const e = ['0.944','0.933','0.922','0.900','0.900','0.873','0.860','0.833','0.822','0.806','0.785','0.772','0.744','1.674','1.699','1.661','1.639','1.616'];
const f = ['23.000','23.014','23.017','23.001','23.504','23.567','23.551','23.504','23.517','23.501','23.487','23.467','23.439','23.412','23.387','23.366','23.334','23.301'];
const i = ['2.001','.702','.500','.224','.005','0.952','0.713','0.502','0.412','0.325','0.207','0.113','0.075','0.047','0.016','0.017','0.018','0.011'];
const j = ['0.000','-0.279','-0.530','-0.737','-0.970','-1.130','-1.313','-1.480','-1.519','-1.730','-1.834','-1.918','-1.953','-2.014','-2.106','-2.134','-2.138','-2.157'];
const k = ['0.011','0.003','2.753','2.544','2.335','2.153','.900','.012','.682','.576','1.457','1.333','1.328','1.257','1.244','1.224','1.253','1.251'];
const markedH = [1,3,5,9,11,13];

const rowText = {
  2: {1:'<b class="underline">Received from Working Model</b>', 4:'<b class="underline">Sent to Working Model</b>'},
  3: {3:'<div class="text-right">IP 140</div>', 6:'<div class="text-right">IP 40</div>', 10:'<div class="text-right">IP 100</div>'},
  4: {1:'Spool turning counts', 3:'<div class="-m-[1px] h-[9px] bg-[#bdbdbd] text-center">1</div>', 4:'Fwd position', 6:'<div class="-m-[1px] h-[9px] bg-[#bdbdbd] text-right">22.638</div>', 8:'Hor Location', 10:'<div class="-m-[1px] h-[9px] bg-[#bdbdbd] text-right">1.100</div>'},
  5: {1:'(degrees)', 3:'<div class="-m-[1px] h-[9px] bg-[#ffff80] text-center">1.41</div>', 4:'(0.1 mm)', 8:'(0 - 655.35 mm)'},
  6: {},
  8: {8:'<span class="ml-[12px]">(FRACTION LIN)</span>'},
  9: {1:'<b class="block text-center">OCT</b>', 2:'<b class="block text-center">ENC</b>', 3:'<b class="block text-center">DEG</b>'},
  10: {}
};
['DESCRIPTION','DIST','WM','ADJ'].forEach((t, n) => {
  [4,8,12].forEach(c => { rowText[9][c + n] = `<b class="block ${n ? 'text-center' : ''}">${t}</b>`; });
});
rowText[9][16] = '<b>DESCRI</b>';

const thick = c => [3,7,11,15].includes(c);
const cellClass = (r, c) => {
  let s = 'min-w-0 whitespace-nowrap px-[1px] text-[8px] leading-[9px]';
  if (thick(c)) s += ' border-r-2 border-r-black';
  else if (c > 3) s += ' border-r border-r-[#bdbdbd]';
  if (r === 6 && c > 3) s += ' border-b border-b-black';
  else if (r === 8) s += ' border-b border-b-black';
  else if (c > 3 && r > 8) s += ' border-b border-b-[#bdbdbd]';
  return s;
};

let html = `<div class="${GRID} h-[11px] text-[9px]"><span class="${HEADCELL}"></span>${letters.map(l => `<span class="${HEADCELL}">${l}</span>`).join('')}</div>`;
html += `<div class="${GRID} h-[10px] border-b-2 border-b-black text-[8px] leading-[8px]"><span class="${HEADCELL}">1</span>${letters.map((l, n) => `<span class="text-center">${n + 1}</span>`).join('')}</div>`;

for (let r = 2; r <= 28; r++) {
  let row = `<span class="${HEADCELL} text-[8px]">${r}</span>`;
  if (r === 7) {
    row += `<div class="col-span-3 border-r-2 border-r-black bg-[#00ffff] text-center text-[8px] leading-[9px]">POSITION</div>`;
    for (let c = 4; c <= 16; c++) {
      const t = {4:'215 UPINDEXER', 8:'OSCILLATOR', 12:'SHIDEX CAM', 16:'LIFT CA'}[c] || '';
      row += `<div class="${cellClass(r, c)}">${t}</div>`;
    }
  } else if (r <= 10) {
    for (let c = 1; c <= 16; c++) row += `<div class="${cellClass(r, c)}">${(rowText[r] || {})[c] || ''}</div>`;
  } else {
    const n = r - 11;
    const vals = {1:oct[n], 2:String(n), 3:deg[n], 5:e[n], 6:f[n], 7:e[n], 9:i[n], 10:j[n], 11:k[n],
      13: n < 13 ? '0.557' : '1.11' + n % 10, 14: n < 13 ? '5.247' : '1.24' + n % 10, 15: n < 13 ? '3.047' : '4.08' + n % 10};
    for (let c = 1; c <= 16; c++) {
      let cls = cellClass(r, c);
      if (c <= 2) cls += ' text-center';
      if (c === 3) cls += ' bg-[#bdbdbd] text-center';
      if (c > 4 && vals[c]) cls += ' text-right';
      if (c === 6 || c === 10 || c === 14) cls += ' bg-[#bdbdbd] border-r-[#bdbdbd]';
      let t = vals[c] || '';
      if (c === 8) {
        cls += ' bg-[#ff00ff] border-r-[#ff00ff] border-b-[#ff00ff] text-right italic';
        t = markedH.includes(n) ? '<span class="text-[6px] font-bold">#######</span>' : '';
      }
      if ((c === 12 && r >= 24) || (c === 16 && r >= 23)) {
        cls += ' bg-[image:repeating-linear-gradient(90deg,#00e000_0_2px,#fff_2px_3px)] border-b-[#00e000]';
        if (r === 24 && c === 12) t = '<b class="text-[6.5px]">PINCH ROLLER ON</b>';
        if (r === 23 && c === 16) t = '<b>CLUTC</b>';
      }
      row += `<div class="${cls}">${t}</div>`;
    }
  }
  html += `<div class="${GRID} ${r <= 10 ? 'h-[9.1px]' : 'h-[8.9px]'}">${row}</div>`;
}
document.getElementById('sheet').innerHTML = html;
</script>
</body>
</html>
